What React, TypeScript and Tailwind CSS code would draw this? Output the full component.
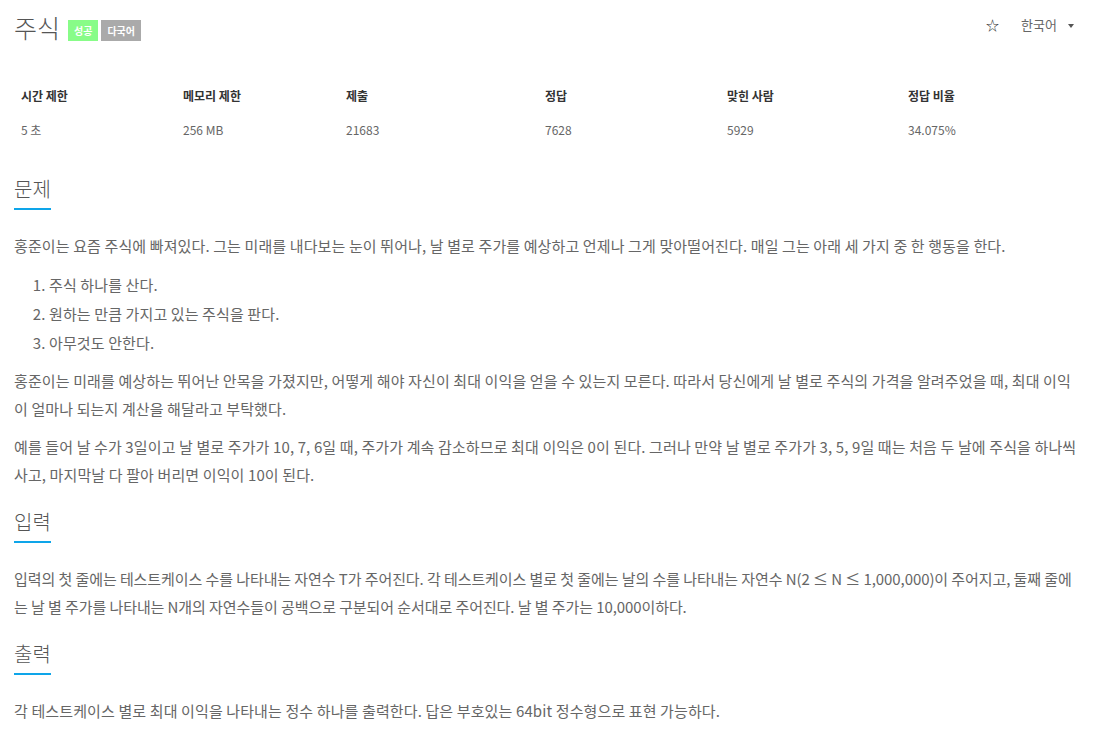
import React from "react";

const font = { fontFamily: '"Noto Sans CJK KR", "Noto Sans", sans-serif' };

const stats = [
  { label: "시간 제한", value: "5 초" },
  { label: "메모리 제한", value: "256 MB" },
  { label: "제출", value: "21683" },
  { label: "정답", value: "7628" },
  { label: "맞힌 사람", value: "5929" },
  { label: "정답 비율", value: "34.075%" },
];

function SectionTitle({ children }: { children: React.ReactNode }) {
  return (
    <div className="mb-[22px]">
      <h2 className="inline-block border-b-2 border-[#0ea5e9] pb-[4px] text-[20px] leading-[30px] font-light text-[#555]">
        {children}
      </h2>
    </div>
  );
}

export default function App() {
  return (
    <div className="min-h-[743px] bg-white px-[14px] text-[#666]" style={font}>
      {/* Title bar */}
      <div className="flex items-start justify-between pt-[10px]">
        <div className="flex items-end gap-[8px]">
          <h1 className="text-[25px] leading-[34px] font-light text-[#555]">주식</h1>
          <div className="mb-[3px] flex gap-[3px]">
            <span className="h-[21px] bg-[#88fc88] px-[6px] text-[10px] leading-[21px] font-bold text-white">성공</span>
            <span className="h-[21px] bg-[#aaaaaa] px-[6px] text-[10px] leading-[21px] font-bold text-white">다국어</span>
          </div>
        </div>
        <div className="mt-[5px] flex items-center pr-[6px] text-[13px] text-[#666]">
          <span className="mr-[22px] text-[13px] text-[#333]">☆</span>
          <span>한국어</span>
          <span className="ml-[11px] mt-[2px] h-0 w-0 border-x-[3px] border-t-[4px] border-x-transparent border-t-[#555]" />
        </div>
      </div>

      {/* Stats table */}
      <div className="mt-[35px] grid grid-cols-[162px_163px_199px_182px_181px_1fr] text-[12px]">
        {stats.map((s) => (
          <div key={s.label} className="flex h-[34px] items-center px-[7px] font-bold text-[#333]">
            {s.label}
          </div>
        ))}
        {stats.map((s) => (
          <div key={s.value} className="flex h-[34px] items-center px-[7px] text-[#666]">
            {s.value}
          </div>
        ))}
      </div>

      {/* 문제 */}
      <div className="mt-[27px]">
        <SectionTitle>문제</SectionTitle>
        <div className="text-[15px] leading-[28px] tracking-[0.12px]">
          <p className="mb-[10px]">
            홍준이는 요즘 주식에 빠져있다. 그는 미래를 내다보는 눈이 뛰어나, 날 별로 주가를 예상하고 언제나 그게 맞아떨어진다. 매일 그는 아래 세 가지 중 한 행동을 한다.
          </p>
          <ol className="mb-[10px] list-decimal pl-[35px]">
            <li className="leading-[29px]">주식 하나를 산다.</li>
            <li className="leading-[29px]">원하는 만큼 가지고 있는 주식을 판다.</li>
            <li className="leading-[29px]">아무것도 안한다.</li>
          </ol>
          <p className="mb-[10px]">
            홍준이는 미래를 예상하는 뛰어난 안목을 가졌지만, 어떻게 해야 자신이 최대 이익을 얻을 수 있는지 모른다. 따라서 당신에게 날 별로 주식의 가격을 알려주었을 때, 최대 이익이 얼마나 되는지 계산을 해달라고 부탁했다.
          </p>
          <p className="mb-[10px]">
            예를 들어 날 수가 3일이고 날 별로 주가가 10, 7, 6일 때, 주가가 계속 감소하므로 최대 이익은 0이 된다. 그러나 만약 날 별로 주가가 3, 5, 9일 때는 처음 두 날에 주식을 하나씩 사고, 마지막날 다 팔아 버리면 이익이 10이 된다.
          </p>
        </div>
      </div>

      {/* 입력 */}
      <div className="mt-[18px]">
        <SectionTitle>입력</SectionTitle>
        <p className="mb-[10px] text-[15px] leading-[28px] tracking-[-0.08px]">
          입력의 첫 줄에는 테스트케이스 수를 나타내는 자연수 T가 주어진다. 각 테스트케이스 별로 첫 줄에는 날의 수를 나타내는 자연수 N(2 ≤ N ≤ 1,000,000)이 주어지고, 둘째 줄에는 날 별 주가를 나타내는 N개의 자연수들이 공백으로 구분되어 순서대로 주어진다. 날 별 주가는 10,000이하다.
        </p>
      </div>

      {/* 출력 */}
      <div className="mt-[18px]">
        <SectionTitle>출력</SectionTitle>
        <p className="text-[15px] leading-[28px] tracking-[0.12px]">
          각 테스트케이스 별로 최대 이익을 나타내는 정수 하나를 출력한다. 답은 부호있는 64bit 정수형으로 표현 가능하다.
        </p>
      </div>
    </div>
  );
}
